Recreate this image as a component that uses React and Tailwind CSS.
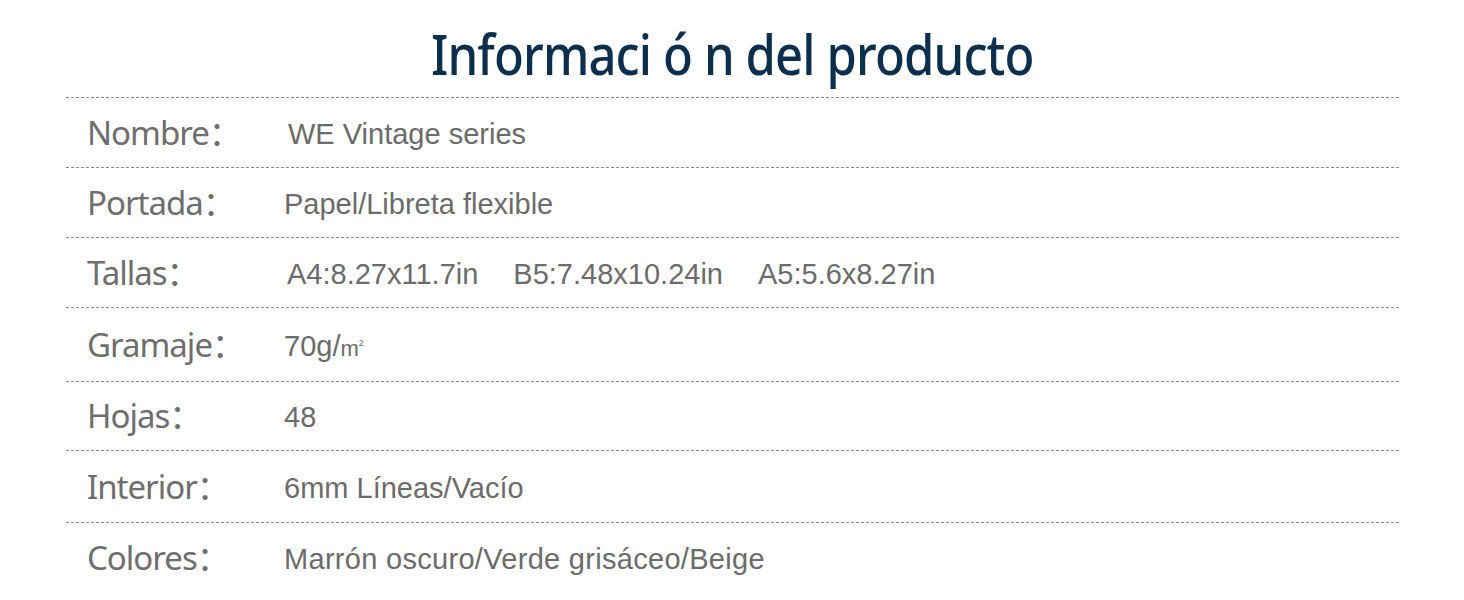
export default function App() {
  const rows = [
    { label: "Nombre", value: <span className="pl-[4px]">WE Vintage series</span>, h: "h-[70px]" },
    { label: "Portada", value: "Papel/Libreta flexible", h: "h-[70px]" },
    {
      label: "Tallas",
      value: (
        <span className="flex gap-[35px] pl-[3px]">
          <span>A4:8.27x11.7in</span>
          <span>B5:7.48x10.24in</span>
          <span>A5:5.6x8.27in</span>
        </span>
      ),
      h: "h-[70px]",
    },
    {
      label: "Gramaje",
      value: (
        <span>
          70g/<span className="text-[22px]">m</span>
          <span className="text-[9px] align-[10px]">2</span>
        </span>
      ),
      h: "h-[74px]",
    },
    { label: "Hojas", value: "48", h: "h-[69px]" },
    { label: "Interior", value: "6mm Líneas/Vacío", h: "h-[72px]" },
    {
      label: "Colores",
      value: <span className="tracking-[0.3px]">Marrón oscuro/Verde grisáceo/Beige</span>,
      h: "h-[70px]",
    },
  ];
  return (
    <div className="w-[1464px] h-[600px] bg-white overflow-hidden">
      <div className="h-[97px] flex justify-center items-start pt-[17px]">
        <h1
          className="text-[56px] leading-[72px] font-medium text-[#0b2f4c] tracking-[-1px] scale-x-[0.875]"
          style={{ fontFamily: '"Noto Sans", "Open Sans", sans-serif' }}
        >
          Informaci ó n del producto
        </h1>
      </div>
      <div className="mx-[66px] w-[1333px]">
        {rows.map((r) => (
          <div
            key={r.label}
            className={`flex items-center border-t border-dashed border-[#8c8c8c] ${r.h}`}
          >
            <div
              className="w-[218px] pl-[21px] text-[33px] tracking-[-1px] text-[#6e6e6e] leading-none pb-[2px]"
              style={{ fontFamily: '"Noto Sans", "Noto Sans CJK SC", sans-serif' }}
            >
              {r.label}
              <span style={{ fontFamily: '"Noto Sans CJK SC", sans-serif' }}>：</span>
            </div>
            <div
              className="text-[29px] text-[#6b6b6b] leading-none pt-[3px]"
              style={{ fontFamily: '"Liberation Sans", Arial, sans-serif' }}
            >
              {r.value}
            </div>
          </div>
        ))}
      </div>
    </div>
  );
}
